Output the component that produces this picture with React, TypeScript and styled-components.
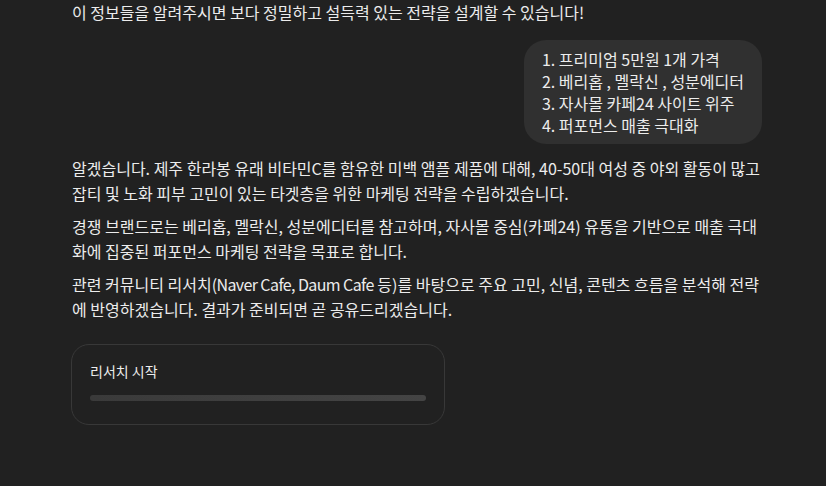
import styled, { createGlobalStyle } from "styled-components";

const GlobalStyle = createGlobalStyle`
  html, body {
    margin: 0;
    padding: 0;
    background: #212121;
  }
  body {
    font-family: "Noto Sans CJK KR", "Noto Sans", sans-serif;
    color: #ececec;
  }
`;

const requests = [
  "1. 프리미엄 5만원 1개 가격",
  "2. 베리홉 , 멜락신 , 성분에디터",
  "3. 자사몰 카페24 사이트 위주",
  "4. 퍼포먼스 매출 극대화",
];

export default function App() {
  return (
    <>
      <GlobalStyle />
      <Thread>
        <Text>이 정보들을 알려주시면 보다 정밀하고 설득력 있는 전략을 설계할 수 있습니다!</Text>
        <UserRow>
          <Bubble>
            {requests.map((r) => (
              <div key={r}>{r}</div>
            ))}
          </Bubble>
        </UserRow>
        <Reply>
          <Text>
            알겠습니다. 제주 한라봉 유래 비타민C를 함유한 미백 앰플 제품에 대해, 40-50대 여성 중 야외 활동이 많고
            잡티 및 노화 피부 고민이 있는 타겟층을 위한 마케팅 전략을 수립하겠습니다.
          </Text>
          <Text>
            경쟁 브랜드로는 베리홉, 멜락신, 성분에디터를 참고하며, 자사몰 중심(카페24) 유통을 기반으로 매출
            극대화에 집중된 퍼포먼스 마케팅 전략을 목표로 합니다.
          </Text>
          <Text>
            관련 커뮤니티 리서치<Latin>(Naver Cafe, Daum Cafe</Latin> 등)를 바탕으로 주요 고민, 신념, 콘텐츠
            흐름을 분석해 전략에 반영하겠습니다. 결과가 준비되면 곧 공유드리겠습니다.
          </Text>
        </Reply>
        <ResearchCard>
          <CardTitle>리서치 시작</CardTitle>
          <Progress>
            <ProgressFill style={{ width: "100%" }} />
          </Progress>
        </ResearchCard>
      </Thread>
    </>
  );
}

const Thread = styled.div`
  width: 690px;
  margin-left: 72px;
  display: flex;
  flex-direction: column;
`;

const Text = styled.p`
  margin: 0;
  font-size: 16px;
  line-height: 25.5px;
  color: #ececec;
`;

// latin runs render a touch more condensed in the reference
const Latin = styled.span`
  letter-spacing: -0.6px;
`;

const UserRow = styled.div`
  display: flex;
  justify-content: flex-end;
  margin-top: 14px;
`;

const Bubble = styled.div`
  background: #303030;
  border-radius: 22px;
  padding: 8px 18px 8px 18px;
  font-size: 16px;
  line-height: 22px;
  color: #ececec;
`;

const Reply = styled.div`
  display: flex;
  flex-direction: column;
  gap: 7px;
  margin-top: 12px;
`;

const ResearchCard = styled.div`
  box-sizing: border-box;
  width: 374px;
  height: 81px;
  margin-top: 21px;
  margin-left: -1px;
  border: 1px solid #383838;
  border-radius: 18px;
  padding: 16px 18px 0 18px;
`;

const CardTitle = styled.div`
  font-size: 14px;
  line-height: 20px;
  color: #ececec;
`;

const Progress = styled.div`
  margin-top: 14px;
  height: 6px;
  border-radius: 4px;
  background: #3a3a3a;
  overflow: hidden;
`;

const ProgressFill = styled.div`
  height: 100%;
  background: linear-gradient(90deg, #3a3a3a, #444444);
`;
